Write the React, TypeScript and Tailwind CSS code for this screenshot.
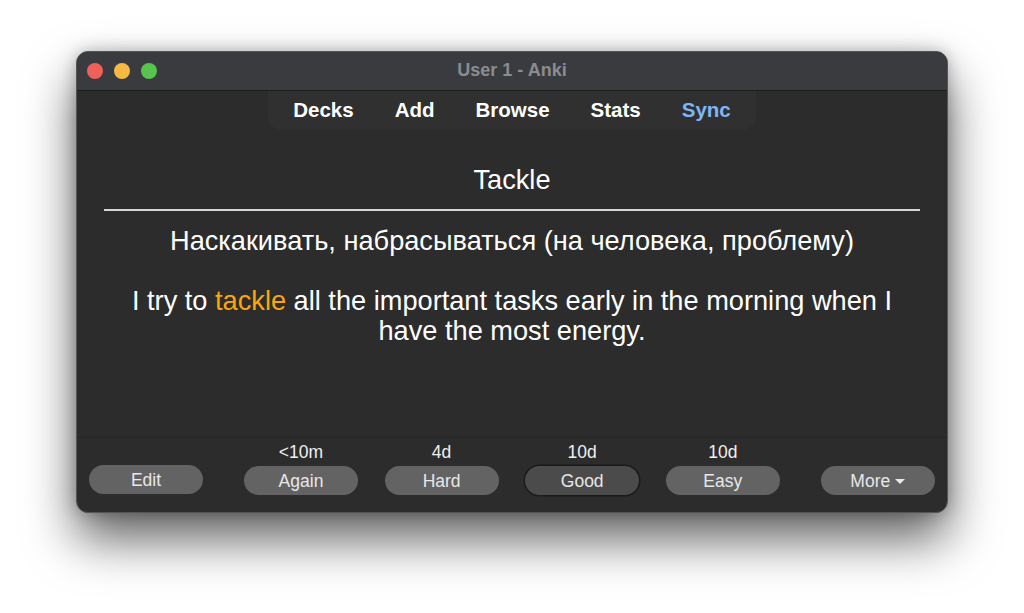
import React from 'react';

const sans = { fontFamily: '"Liberation Sans", Arial, sans-serif' };

function Answer({ label, due, dark }: { label: string; due: string; dark?: boolean }) {
  return (
    <div className="flex flex-col items-center w-[114px]">
      <span className="text-[17.5px] leading-[20px] text-[#f0f0f0] mb-[4px]">{due}</span>
      <button
        className={
          dark
            ? 'w-[114px] h-[29px] pt-[1px] rounded-full bg-[#4b4b4b] text-[17.5px] text-[#e8e8e8] shadow-[0_0_0_1.5px_#1a1a1a]'
            : 'w-[114px] h-[29px] pt-[1px] rounded-full bg-[#636363] text-[17.5px] text-[#e8e8e8]'
        }
      >
        {label}
      </button>
    </div>
  );
}

export default function App() {
  return (
    <div className="w-[1024px] h-[613px] bg-white pl-[76px] pt-[51px] overflow-hidden" style={sans}>
      <div className="w-[872px] h-[462px] rounded-[12px] bg-[#2c2c2c] border border-[#555] flex flex-col overflow-hidden shadow-[0_26px_50px_rgba(0,0,0,0.62),0_0_16px_rgba(0,0,0,0.25)]">
        <div className="relative h-[39px] shrink-0 bg-[#3a3b3f] border-b border-[#1c1c1c] flex items-center pl-[10px] gap-[11px]">
          <span className="w-[16px] h-[16px] rounded-full bg-[#f0605a]" />
          <span className="w-[16px] h-[16px] rounded-full bg-[#f5b944]" />
          <span className="w-[16px] h-[16px] rounded-full bg-[#58c34f]" />
          <span className="absolute inset-0 pb-[2px] flex items-center justify-center text-[18px] font-bold text-[#8b8c8f]">
            User 1 - Anki
          </span>
        </div>

        <div className="flex justify-center shrink-0">
          <nav className="w-[488px] h-[39px] rounded-b-[14px] bg-[#303030] flex items-center justify-center gap-[41px] text-[20.5px] font-bold text-white">
            <span>Decks</span>
            <span>Add</span>
            <span>Browse</span>
            <span>Stats</span>
            <span className="text-[#7fb6f5]">Sync</span>
          </nav>
        </div>

        <div className="flex-1 px-[27px] pt-[35px] text-center text-white">
          <div className="text-[27.2px] leading-[30px]">Tackle</div>
          <hr className="mt-[14px] border-t-2 border-[#d8d8d8]" />
          <div className="mt-[15px] text-[27.2px] leading-[30px] px-[20px]">
            Наскакивать, набрасываться (на человека, проблему)
            <div className="h-[30px]" />
            I try to <span className="text-[#fba70b]">tackle</span> all the important tasks early in the morning when I have the most energy.
          </div>
        </div>

        <div className="h-[75px] shrink-0 border-t border-[#262626] flex items-start pl-[12px] pt-[4px]">
          <button className="mt-[23px] w-[114px] h-[29px] pt-[1px] rounded-full bg-[#636363] text-[17.5px] text-[#e8e8e8] mr-[41px]">
            Edit
          </button>
          <div className="flex gap-[26.6px]">
            <Answer label="Again" due="<10m" />
            <Answer label="Hard" due="4d" />
            <Answer label="Good" due="10d" dark />
            <Answer label="Easy" due="10d" />
          </div>
          <button className="mt-[24px] ml-[41px] w-[114px] h-[29px] pt-[1px] rounded-full bg-[#636363] text-[17.5px] text-[#e8e8e8] flex items-center justify-center gap-[5px]">
            More
            <svg width="10" height="5" viewBox="0 0 10 5"><path d="M0 0h10L5 5z" fill="#e8e8e8" /></svg>
          </button>
        </div>
      </div>
    </div>
  );
}
